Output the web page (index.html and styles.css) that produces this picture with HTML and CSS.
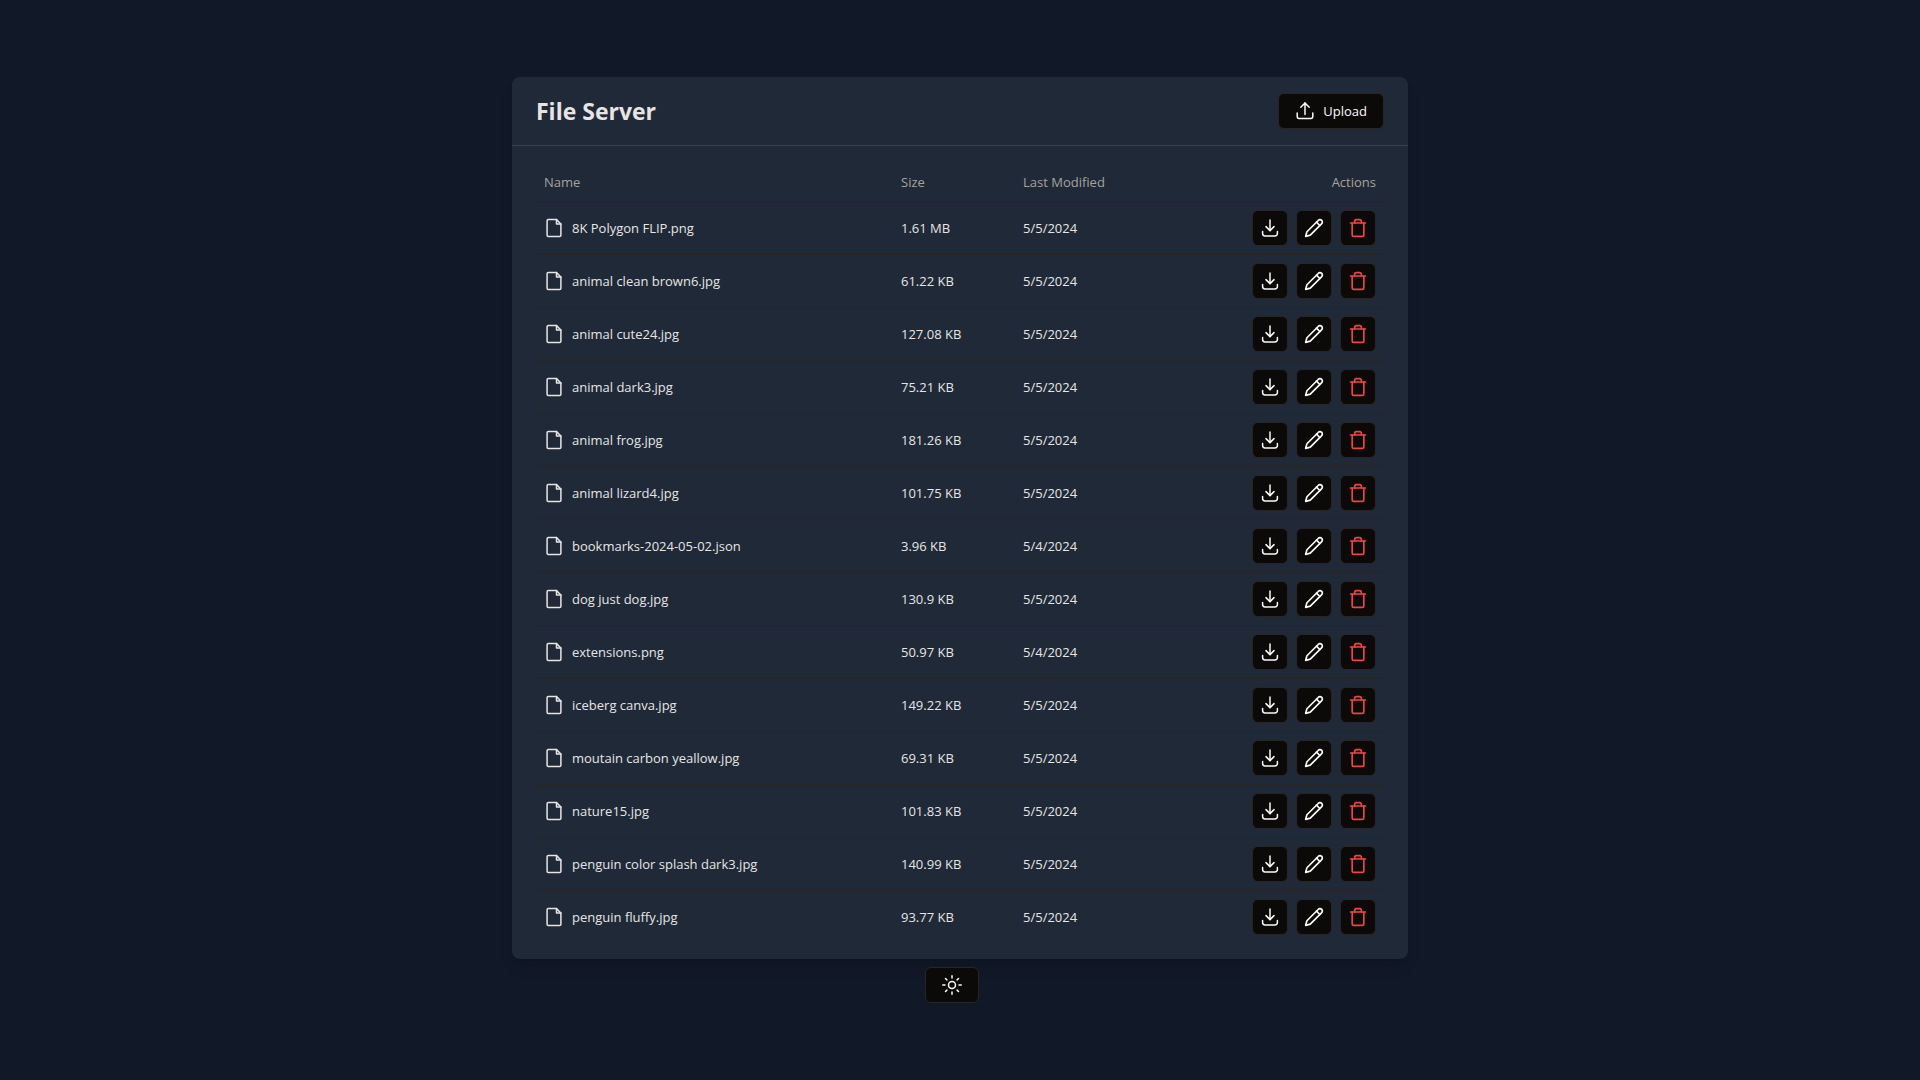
FILE: index.html
```html
<!DOCTYPE html>
<html lang="en">
<head>
<meta charset="utf-8">
<meta name="viewport" content="width=device-width, initial-scale=1">
<title>File Server</title>
<link rel="stylesheet" href="styles.css">
</head>
<body>
<svg class="sprite" aria-hidden="true">
  <symbol id="file" viewBox="0 0 20 20"><path d="M12.500 1.600H4.300a1.200 1.200 0 0 0-1.200 1.200v14.400a1.200 1.200 0 0 0 1.200 1.200h11.400a1.200 1.200 0 0 0 1.200-1.200V6z"/><path d="M12.500 1.600V6h4.400"/></symbol>
  <symbol id="upload" viewBox="0 0 20 20"><path d="M2.200 12v3.600a1.800 1.800 0 0 0 1.800 1.800h12a1.800 1.800 0 0 0 1.800-1.800V12"/><path d="m5.800 6.200 4.200-4.200 4.200 4.200"/><path d="M10 2v11.500"/></symbol>
  <symbol id="download" viewBox="0 0 20 20"><path d="M2.600 13.500v2.100a2.400 2.400 0 0 0 2.400 2.400h10a2.400 2.400 0 0 0 2.400-2.400v-2.100"/><path d="m6 8.600 4 4 4-4"/><path d="M10 2v10.500"/></symbol>
  <symbol id="pencil" viewBox="0 0 24 24"><path d="M17 3a2.850 2.830 0 1 1 4 4L7.500 20.500 2 22l1.500-5.500Z"/><path d="m15 5 4 4"/></symbol>
  <symbol id="trash" viewBox="0 0 24 24"><path d="M3 6h18"/><path d="M19 6v14c0 1-1 2-2 2H7c-1 0-2-1-2-2V6"/><path d="M8 6V4c0-1 1-2 2-2h4c1 0 2 1 2 2v2"/></symbol>
  <symbol id="sun" viewBox="0 0 20 20"><circle cx="10" cy="10" r="3.500"/><path d="M10 .8v2.200M10 17v2.200M.8 10H3M17 10h2.200M3.500 3.500l1.400 1.400M15.100 15.100l1.400 1.400M4.900 15.100l-1.400 1.400M16.500 3.500l-1.400 1.400"/></symbol>
</svg>
<main class="page">
  <section class="card">
    <header class="card-header">
      <h1 class="title">File Server</h1>
      <button class="button" type="button"><svg class="icon icon-fine"><use href="#upload"/></svg>Upload</button>
    </header>
    <div class="card-body">
      <table class="files">
        <thead>
          <tr><th class="col-name">Name</th><th class="col-size">Size</th><th>Last Modified</th><th class="col-actions">Actions</th></tr>
        </thead>
        <tbody id="rows"></tbody>
      </table>
    </div>
  </section>
  <button class="button theme-toggle" type="button" aria-label="Toggle theme"><svg class="icon icon-fine"><use href="#sun"/></svg></button>
</main>
<script src="files.js"></script>
</body>
</html>
```
FILE: styles.css
```css
*, *::before, *::after { box-sizing: border-box; }

body {
  margin: 0;
  background: #111827;
  color: #e7e5e4;
  font-family: "Segoe UI", "Open Sans", "Noto Sans", sans-serif;
  font-size: 13px;
  line-height: 20px;
}

.sprite { display: none; }

.page {
  min-height: 100vh;
  display: flex;
  flex-direction: column;
  align-items: center;
  justify-content: center;
  gap: 8px;
}

.card {
  width: 100%;
  max-width: 896px;
  background: #1f2937;
  border-radius: 8px;
  box-shadow: 0 10px 15px -3px rgba(0, 0, 0, 0.1), 0 4px 6px -4px rgba(0, 0, 0, 0.1);
}

.card-header {
  display: flex;
  align-items: center;
  justify-content: space-between;
  padding: 16px 24px;
  border-bottom: 1px solid #374151;
}

.title {
  margin: 0;
  font-size: 23px;
  font-weight: 700;
  line-height: 32px;
}

.card-body { padding: 16px 24px; }

.icon {
  width: 20px;
  height: 20px;
  flex: none;
  fill: none;
  stroke: currentColor;
  stroke-width: 2;
  stroke-linecap: round;
  stroke-linejoin: round;
}

/* icons drawn on a 20-unit grid */
.icon-fine { stroke-width: 1.5; }

.button {
  display: inline-flex;
  align-items: center;
  justify-content: center;
  gap: 8px;
  height: 36px;
  padding: 0 16px;
  border: 1px solid #292524;
  border-radius: 6px;
  background: #0c0a09;
  color: #fafaf9;
  font: inherit;
  cursor: pointer;
}

.button:hover { background: #292524; }

.icon-button { width: 36px; padding: 0; }

.danger { color: #ef4444; }

.theme-toggle { margin-right: 16px; }

.files {
  width: 100%;
  table-layout: fixed;
  border-collapse: separate;
  border-spacing: 0;
}

.files th {
  height: 40px;
  padding: 0 8px;
  border-bottom: 1px solid #292524;
  color: #a8a29e;
  font-weight: 400;
  text-align: left;
}

.files td {
  padding: 8px;
  border-bottom: 1px solid #292524;
}

.files tbody tr:last-child td { border-bottom: 0; }

.files .col-name { width: 357px; }
.files .col-size { width: 122px; }
.files .col-actions { text-align: right; }

.file-name, .actions {
  display: flex;
  align-items: center;
  gap: 8px;
}

.actions { justify-content: flex-end; }
```
FILE: files.js
```js
const files = [
  ["8K Polygon FLIP.png", "1.61 MB", "5/5/2024"],
  ["animal clean brown6.jpg", "61.22 KB", "5/5/2024"],
  ["animal cute24.jpg", "127.08 KB", "5/5/2024"],
  ["animal dark3.jpg", "75.21 KB", "5/5/2024"],
  ["animal frog.jpg", "181.26 KB", "5/5/2024"],
  ["animal lizard4.jpg", "101.75 KB", "5/5/2024"],
  ["bookmarks-2024-05-02.json", "3.96 KB", "5/4/2024"],
  ["dog just dog.jpg", "130.9 KB", "5/5/2024"],
  ["extensions.png", "50.97 KB", "5/4/2024"],
  ["iceberg canva.jpg", "149.22 KB", "5/5/2024"],
  ["moutain carbon yeallow.jpg", "69.31 KB", "5/5/2024"],
  ["nature15.jpg", "101.83 KB", "5/5/2024"],
  ["penguin color splash dark3.jpg", "140.99 KB", "5/5/2024"],
  ["penguin fluffy.jpg", "93.77 KB", "5/5/2024"]
];

const icon = (id, fine) => `<svg class="icon${fine ? " icon-fine" : ""}"><use href="#${id}"/></svg>`;
const action = (id, label, fine, extra = "") =>
  `<button class="button icon-button ${extra}" type="button" aria-label="${label}">${icon(id, fine)}</button>`;

document.getElementById("rows").innerHTML = files.map(([name, size, date]) => `
  <tr>
    <td><div class="file-name">${icon("file", true)}<span>${name}</span></div></td>
    <td>${size}</td>
    <td>${date}</td>
    <td><div class="actions">${action("download", "Download", true)}${action("pencil", "Rename", false)}${action("trash", "Delete", false, "danger")}</div></td>
  </tr>`).join("");
```
